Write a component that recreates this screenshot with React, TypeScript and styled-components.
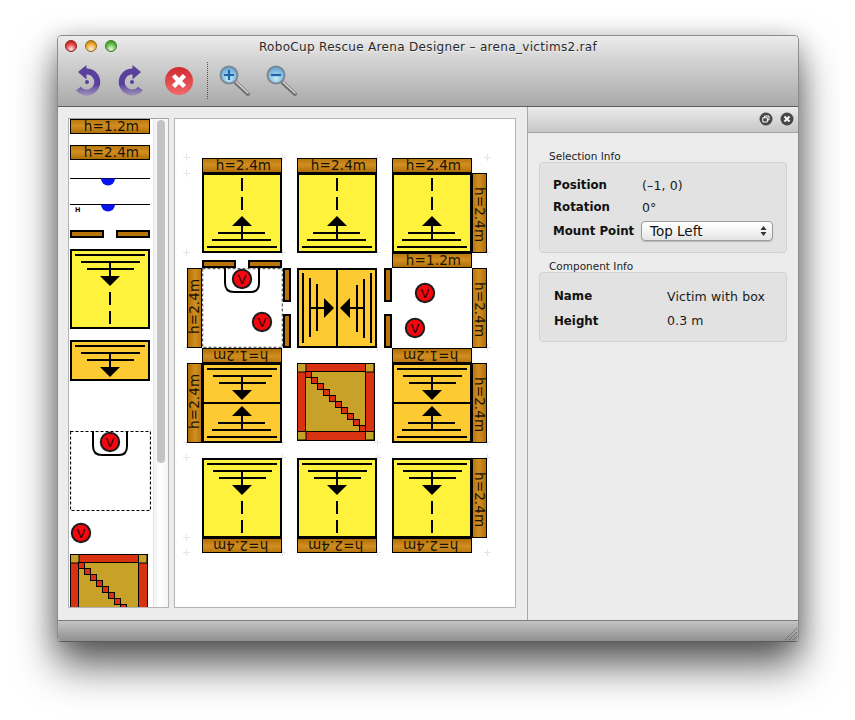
import React from 'react';
import styled, { createGlobalStyle } from 'styled-components';

const GlobalStyle = createGlobalStyle`
  html, body {
    margin: 0;
    padding: 0;
    background: #fff;
    font-family: 'DejaVu Sans', 'Liberation Sans', sans-serif;
  }
`;

const Page = styled.div`
  width: 855px;
  height: 720px;
  padding: 35px 0 0 57px;
  box-sizing: border-box;
  overflow: hidden;
`;

const Window = styled.div`
  width: 742px;
  height: 607px;
  box-sizing: border-box;
  display: flex;
  flex-direction: column;
  border: 1px solid #8c8c8c;
  border-bottom-color: #5c5c5c;
  border-radius: 5px 5px 4px 4px;
  background: #ececec;
  box-shadow: 0 24px 42px rgba(0, 0, 0, 0.62), 0 4px 24px rgba(0, 0, 0, 0.22);
`;

const Header = styled.div`
  height: 71px;
  flex: none;
  box-sizing: border-box;
  border-bottom: 1px solid #5e5e5e;
  border-radius: 4px 4px 0 0;
  background: linear-gradient(#ececec, #d6d6d6 30%, #a9a9a9);
  display: flex;
  flex-direction: column;
`;

const TitleBar = styled.div`
  height: 22px;
  position: relative;
  display: flex;
  align-items: center;
  justify-content: center;
`;

const Lights = styled.div`
  position: absolute;
  left: 7px;
  top: 4px;
  display: flex;
  gap: 8px;
`;

const Light = styled.span<{ $color: string; $dark: string }>`
  width: 12px;
  height: 12px;
  border-radius: 50%;
  border: 1px solid ${(p) => p.$dark};
  box-sizing: border-box;
  background: radial-gradient(circle at 50% 80%, #fff8 0, ${(p) => p.$color} 55%, ${(p) => p.$dark} 100%);
`;

const Title = styled.div`
  font-size: 12px;
  color: #2a2a2a;
  letter-spacing: 0.32px;
  text-shadow: 0 1px 0 #f2f2f2;
`;

const Toolbar = styled.div`
  flex: 1;
  display: flex;
  align-items: flex-start;
  padding: 5px 0 0 11px;
`;

const ToolIcon = styled.svg<{ $right?: number; $left?: number; $top?: number }>`
  flex: none;
  display: block;
  margin: ${(p) => p.$top ?? 0}px ${(p) => p.$right ?? 0}px 0 ${(p) => p.$left ?? 0}px;
`;

const ToolSep = styled.div`
  width: 0;
  height: 37px;
  margin: -1px 11px 0 13px;
  border-left: 1px dotted #555;
`;

const Body = styled.div`
  flex: 1;
  display: flex;
  min-height: 0;
`;

const Main = styled.div`
  width: 470px;
  flex: none;
  box-sizing: border-box;
  border-right: 1px solid #a8a8a8;
  padding: 11px 0 12px 10px;
  display: flex;
  gap: 5px;
`;

const Palette = styled.div`
  width: 101px;
  flex: none;
  box-sizing: border-box;
  border: 1px solid #b4b4b4;
  border-top-color: #a0a0a0;
  background: #fff;
  display: flex;
  overflow: hidden;
`;

const PaletteList = styled.div`
  width: 84px;
  flex: none;
  padding-left: 1px;
  box-sizing: border-box;
  display: flex;
  flex-direction: column;
`;

const PaletteItem = styled.div<{ $gap: number }>`
  flex: none;
  margin-top: ${(p) => p.$gap}px;
  line-height: 0;
`;

const ScrollTrack = styled.div`
  flex: 1;
  padding: 1px 3px 0 3px;
  background: linear-gradient(90deg, #f2f2f2, #fff 40%, #f4f4f4);
  border-left: 1px solid #e6e6e6;
`;

const ScrollThumb = styled.div`
  height: 343px;
  border-radius: 4px;
  background: #c3c3c3;
`;

const Canvas = styled.div`
  width: 342px;
  flex: none;
  box-sizing: border-box;
  border: 1px solid #b4b4b4;
  background: #fff;
  position: relative;
  overflow: hidden;
`;

const Label = styled.div<{ $side?: 'top' | 'bottom' | 'left' | 'right' }>`
  box-sizing: border-box;
  border: 1px solid #000;
  color: #1a1204;
  font-size: 13.5px;
  letter-spacing: 0.01em;
  line-height: 13px;
  display: flex;
  align-items: center;
  justify-content: center;
  padding-inline-start: 3px;
  overflow: hidden;
  white-space: nowrap;
  width: ${(p) => (p.$side === 'left' || p.$side === 'right' ? '15px' : '80px')};
  height: ${(p) => (p.$side === 'left' || p.$side === 'right' ? '80px' : '15px')};
  writing-mode: ${(p) => (p.$side === 'left' || p.$side === 'right' ? 'vertical-rl' : 'horizontal-tb')};
  transform: ${(p) => (p.$side === 'left' || p.$side === 'bottom' ? 'rotate(180deg)' : 'none')};
  background: linear-gradient(
    ${(p) => (p.$side === 'left' || p.$side === 'right' ? '90deg' : '180deg')},
    #b9780e,
    #d18f22 45%,
    #b06f06
  );
`;

const PlacedLabel = styled(Label)<{ $x: number; $y: number }>`
  position: absolute;
  left: ${(p) => p.$x}px;
  top: ${(p) => p.$y}px;
`;

const Drawing = styled.svg`
  display: block;
`;

const PlacedDrawing = styled.svg<{ $x: number; $y: number }>`
  display: block;
  position: absolute;
  left: ${(p) => p.$x}px;
  top: ${(p) => p.$y}px;
`;

const Cross = styled.span<{ $x: number; $y: number }>`
  position: absolute;
  left: ${(p) => p.$x - 3}px;
  top: ${(p) => p.$y - 3}px;
  width: 7px;
  height: 7px;
  background:
    linear-gradient(#e6e6e6, #e6e6e6) 3px 0 / 1px 7px no-repeat,
    linear-gradient(#e6e6e6, #e6e6e6) 0 3px / 7px 1px no-repeat;
`;

const Side = styled.div`
  flex: 1;
  display: flex;
  flex-direction: column;
`;

const SideHead = styled.div`
  height: 26px;
  flex: none;
  box-sizing: border-box;
  border-bottom: 1px solid #a4a4a4;
  background: linear-gradient(#ececec, #c6c6c6);
  display: flex;
  align-items: center;
  justify-content: flex-end;
  gap: 7px;
  padding: 0 4px 1px 0;
`;

const SideContent = styled.div`
  padding: 17px 11px 0 11px;
  display: flex;
  flex-direction: column;
`;

const GroupTitle = styled.div`
  font-size: 10.5px;
  line-height: 12px;
  color: #1c1c1c;
  padding-left: 10px;
`;

const Group = styled.div<{ $height: number; $pad: number }>`
  height: ${(p) => p.$height}px;
  box-sizing: border-box;
  margin: 0 0 7px 0;
  padding-top: ${(p) => p.$pad}px;
  border: 1px solid #d2d2d2;
  border-radius: 4px;
  background: #e2e2e2;
  display: flex;
  flex-direction: column;
`;

const InfoRow = styled.div<{ $height: number; $left: number; $labelWidth: number }>`
  height: ${(p) => p.$height}px;
  flex: none;
  display: grid;
  grid-template-columns: ${(p) => p.$labelWidth}px 1fr;
  align-items: center;
  padding-left: ${(p) => p.$left}px;
`;

const InfoLabel = styled.span`
  font-size: 11.8px;
  font-weight: bold;
  color: #111;
`;

const InfoValue = styled.span`
  font-size: 12.5px;
  letter-spacing: 0.01em;
  color: #1a1a1a;
`;

const Select = styled.div`
  width: 132px;
  height: 20px;
  margin-left: -1px;
  box-sizing: border-box;
  border: 1px solid #9a9a9a;
  border-radius: 4px;
  background: linear-gradient(#fff, #f4f4f4 50%, #e4e4e4);
  box-shadow: 0 1px 1px rgba(0, 0, 0, 0.18);
  display: flex;
  align-items: center;
  justify-content: space-between;
  padding: 0 5px 0 8px;
  font-size: 13.5px;
  color: #111;
`;

const StatusBar = styled.div`
  height: 21px;
  flex: none;
  box-sizing: border-box;
  border-top: 1px solid #7c7c7c;
  border-radius: 0 0 4px 4px;
  background: linear-gradient(#c4c4c4, #8f8f8f);
  display: flex;
  justify-content: flex-end;
  align-items: flex-end;
`;

// ---- drawings ----

const Ramp = ({ rotate = 0, dashes = false }: { rotate?: number; dashes?: boolean }) => (
  <g transform={`rotate(${rotate} 40 40)`} stroke="#000" strokeWidth={2} fill="none">
    <path d="M5 6H75M11 13H70M17 20H64M40 13V28" />
    <path d="M30 27H50L40 37Z" fill="#000" stroke="none" />
    {dashes && <path d="M40 43V56M40 62V75" />}
  </g>
);

const YellowTile = ({ rotate }: { rotate: number }) => (
  <>
    <rect x={1} y={1} width={78} height={78} fill="#fff23c" stroke="#000" strokeWidth={2} />
    <Ramp rotate={rotate} dashes />
  </>
);

const Victim = ({ cx, cy }: { cx: number; cy: number }) => (
  <g>
    <circle cx={cx} cy={cy} r={9.2} fill="#f4070f" stroke="#1c1c1c" strokeWidth={2} />
    <text x={cx} y={cy + 4.8} textAnchor="middle" fontSize={13} fontFamily="'DejaVu Sans', sans-serif" fill="#300">
      V
    </text>
  </g>
);

const VictimBox = ({ stroke, weight }: { stroke: string; weight: number }) => (
  <>
    <rect x={0.5} y={0.5} width={80} height={79} fill="#fff" stroke={stroke} strokeWidth={weight} strokeDasharray="3 2" />
    <path d="M23 0V15Q23 24 32 24H49Q57 24 57 15V0" fill="none" stroke="#000" strokeWidth={2} />
    <Victim cx={40} cy={11} />
  </>
);

const RedTile = () => {
  const steps = Array.from({ length: 10 }, (_, i) => i);
  return (
    <>
      <rect x={0.5} y={0.5} width={77} height={77} fill="#d83212" stroke="#000" />
      <rect x={8.5} y={8.5} width={60} height={60} fill="#c8a228" stroke="#000" />
      {[
        [0.5, 0.5],
        [68.5, 0.5],
        [0.5, 68.5],
        [68.5, 68.5],
      ].map(([x, y]) => (
        <rect key={`${x}-${y}`} x={x} y={y} width={8.5} height={8.5} fill="#c8a228" stroke="#000" />
      ))}
      {steps.map((i) => (
        <rect key={i} x={8.5 + i * 6} y={8.5 + i * 6} width={6} height={6} fill="#d83212" stroke="#000" />
      ))}
    </>
  );
};

const DoorH = () => (
  <>
    <rect x={1} y={1} width={32} height={6} fill="#b87408" stroke="#000" strokeWidth={2} />
    <rect x={47} y={1} width={32} height={6} fill="#b87408" stroke="#000" strokeWidth={2} />
  </>
);

const DoorV = () => (
  <>
    <rect x={1} y={1} width={6} height={32} fill="#b87408" stroke="#000" strokeWidth={2} />
    <rect x={1} y={47} width={6} height={32} fill="#b87408" stroke="#000" strokeWidth={2} />
  </>
);

const Wall = ({ mark }: { mark?: boolean }) => (
  <Drawing width={80} height={26} viewBox="0 0 80 26">
    <path d="M0 12.5H80" stroke="#000" strokeWidth={1} />
    <path d="M31 12.5H45A7 7 0 0 1 31 12.5Z" fill="#0a14f0" />
    {mark && (
      <text x={5} y={20} fontSize={6.5} fontWeight="bold" fontFamily="'DejaVu Sans', sans-serif">
        H
      </text>
    )}
  </Drawing>
);

const Undo = ({ flip }: { flip?: boolean }) => {
  const id = flip ? 'redoFade' : 'undoFade';
  return (
    <ToolIcon width={36} height={36} viewBox="0 0 36 36" $right={9}>
      <defs>
        <linearGradient id={id} gradientUnits="userSpaceOnUse" x1="0" y1="5" x2="0" y2="33">
          <stop offset="0.6" stopColor="#5a3f9c" />
          <stop offset="1" stopColor="#8a78b8" stopOpacity="0.55" />
        </linearGradient>
      </defs>
      <g transform={flip ? 'translate(36 0) scale(-1 1)' : undefined}>
        <path d="M17 8.5H18A10.5 10.5 0 1 1 9.5 25.5" fill="none" stroke={`url(#${id})`} strokeWidth={6} />
        <path d="M17.5 2V16.5L9 9Z" fill="#5a3f9c" />
        <circle cx={18} cy={19} r={2} fill="#5a3f9c" />
      </g>
    </ToolIcon>
  );
};

const Stop = () => (
  <ToolIcon width={30} height={30} viewBox="0 0 30 30" $left={5} $top={3}>
    <defs>
      <linearGradient id="stopFill" x1="0" y1="0" x2="0" y2="1">
        <stop offset="0" stopColor="#d22a30" />
        <stop offset="1" stopColor="#f06a6a" />
      </linearGradient>
    </defs>
    <circle cx={15} cy={15} r={14} fill="url(#stopFill)" />
    <path d="M9.5 9.5L20.5 20.5M20.5 9.5L9.5 20.5" stroke="#fff" strokeWidth={4.5} />
  </ToolIcon>
);

const Magnifier = ({ plus, id }: { plus?: boolean; id: string }) => (
  <ToolIcon width={34} height={36} viewBox="0 0 34 36" $right={13}>
    <defs>
      <radialGradient id={id} cx="0.5" cy="0.7" r="0.7">
        <stop offset="0" stopColor="#c4ecf6" />
        <stop offset="1" stopColor="#5aa0d0" />
      </radialGradient>
    </defs>
    <path d="M16 19L29 31" stroke="#6f6f6f" strokeWidth={4} strokeLinecap="round" />
    <path d="M17 19L29 30" stroke="#d6d6d6" strokeWidth={1.6} strokeLinecap="round" />
    <circle cx={10} cy={12} r={8.5} fill={`url(#${id})`} stroke="#7b8a96" strokeWidth={2} />
    <path d={plus ? 'M5 12H15M10 7V17' : 'M5 12H15'} stroke="#1f66a8" strokeWidth={2.2} />
  </ToolIcon>
);

const PanelButton = ({ kind }: { kind: 'float' | 'close' }) => (
  <Drawing width={14} height={14} viewBox="0 0 14 14">
    <circle cx={7} cy={7} r={6.5} fill="#484848" />
    {kind === 'close' ? (
      <path d="M4.5 4.5L9.5 9.5M9.5 4.5L4.5 9.5" stroke="#fff" strokeWidth={2} />
    ) : (
      <path d="M5.5 5.5V4H10V8H8.5M3.8 5.7H8.3V10H3.8Z" fill="none" stroke="#fff" strokeWidth={1} />
    )}
  </Drawing>
);

// ---- canvas contents (offsets inside the canvas) ----

const CANVAS_X = 175;
const CANVAS_Y = 119;

const labels: { text: string; side: 'top' | 'bottom' | 'left' | 'right'; x: number; y: number }[] = [
  { text: 'h=2.4m', side: 'top', x: 202, y: 158 },
  { text: 'h=2.4m', side: 'top', x: 297, y: 158 },
  { text: 'h=2.4m', side: 'top', x: 392, y: 158 },
  { text: 'h=2.4m', side: 'right', x: 472, y: 173 },
  { text: 'h=1.2m', side: 'top', x: 392, y: 253 },
  { text: 'h=2.4m', side: 'left', x: 187, y: 268 },
  { text: 'h=2.4m', side: 'right', x: 472, y: 268 },
  { text: 'h=1.2m', side: 'bottom', x: 202, y: 348 },
  { text: 'h=1.2m', side: 'bottom', x: 392, y: 348 },
  { text: 'h=2.4m', side: 'left', x: 187, y: 363 },
  { text: 'h=2.4m', side: 'right', x: 472, y: 363 },
  { text: 'h=2.4m', side: 'right', x: 472, y: 458 },
  { text: 'h=2.4m', side: 'bottom', x: 202, y: 538 },
  { text: 'h=2.4m', side: 'bottom', x: 297, y: 538 },
  { text: 'h=2.4m', side: 'bottom', x: 392, y: 538 },
];

const crosses = [
  [186, 157], [282, 157], [377, 157], [487, 157],
  [186, 173], [186, 252], [282, 252], [377, 252], [487, 252],
  [186, 347], [282, 347], [377, 347], [487, 347],
  [186, 442], [282, 442], [377, 442], [487, 442],
  [186, 457], [282, 457], [377, 457], [487, 457],
  [186, 537], [186, 552], [282, 552], [377, 552], [487, 552],
];

const PlacedTile = ({ x, y, children }: { x: number; y: number; children: React.ReactNode }) => (
  <PlacedDrawing $x={x - CANVAS_X} $y={y - CANVAS_Y} width={81} height={80} viewBox="0 0 81 80">
    {children}
  </PlacedDrawing>
);

const OrangeDouble = () => (
  <>
    <rect x={1} y={1} width={78} height={78} fill="#fdcb31" stroke="#000" strokeWidth={2} />
    <Ramp />
    <Ramp rotate={180} />
    <path d="M1 40H79" stroke="#000" strokeWidth={2} />
  </>
);

const App = (): JSX.Element => (
  <Page>
    <GlobalStyle />
    <Window>
      <Header>
        <TitleBar>
          <Lights>
            <Light $color="#ee3c3c" $dark="#8e1c1c" />
            <Light $color="#f4a92c" $dark="#96691a" />
            <Light $color="#5cbe3e" $dark="#3a7a28" />
          </Lights>
          <Title>RoboCup Rescue Arena Designer – arena_victims2.raf</Title>
        </TitleBar>
        <Toolbar>
          <Undo />
          <Undo flip />
          <Stop />
          <ToolSep />
          <Magnifier plus id="lensIn" />
          <Magnifier id="lensOut" />
        </Toolbar>
      </Header>
      <Body>
        <Main>
          <Palette>
            <PaletteList>
              <PaletteItem $gap={0}>
                <Label>h=1.2m</Label>
              </PaletteItem>
              <PaletteItem $gap={11}>
                <Label>h=2.4m</Label>
              </PaletteItem>
              <PaletteItem $gap={6}>
                <Wall />
              </PaletteItem>
              <PaletteItem $gap={0}>
                <Wall mark />
              </PaletteItem>
              <PaletteItem $gap={12}>
                <Drawing width={80} height={8} viewBox="0 0 80 8">
                  <DoorH />
                </Drawing>
              </PaletteItem>
              <PaletteItem $gap={11}>
                <Drawing width={80} height={80} viewBox="0 0 80 80">
                  <YellowTile rotate={0} />
                </Drawing>
              </PaletteItem>
              <PaletteItem $gap={11}>
                <Drawing width={80} height={41} viewBox="0 0 80 41">
                  <rect x={1} y={1} width={78} height={39} fill="#fdcb31" stroke="#000" strokeWidth={2} />
                  <Ramp />
                </Drawing>
              </PaletteItem>
              <PaletteItem $gap={50}>
                <Drawing width={81} height={80} viewBox="0 0 81 80">
                  <VictimBox stroke="#000" weight={1.2} />
                </Drawing>
              </PaletteItem>
              <PaletteItem $gap={11}>
                <Drawing width={22} height={22} viewBox="0 0 22 22">
                  <Victim cx={11} cy={11} />
                </Drawing>
              </PaletteItem>
              <PaletteItem $gap={10}>
                <Drawing width={78} height={78} viewBox="0 0 78 78">
                  <RedTile />
                </Drawing>
              </PaletteItem>
            </PaletteList>
            <ScrollTrack>
              <ScrollThumb />
            </ScrollTrack>
          </Palette>
          <Canvas>
            {crosses.map(([x, y]) => (
              <Cross key={`${x}-${y}`} $x={x - CANVAS_X} $y={y - CANVAS_Y} />
            ))}
            {labels.map((l) => (
              <PlacedLabel key={`${l.x}-${l.y}-${l.side}`} $side={l.side} $x={l.x - CANVAS_X} $y={l.y - CANVAS_Y}>
                {l.text}
              </PlacedLabel>
            ))}
            <PlacedTile x={202} y={173}><YellowTile rotate={180} /></PlacedTile>
            <PlacedTile x={297} y={173}><YellowTile rotate={180} /></PlacedTile>
            <PlacedTile x={392} y={173}><YellowTile rotate={180} /></PlacedTile>

            <PlacedDrawing $x={27} $y={141} width={80} height={8} viewBox="0 0 80 8"><DoorH /></PlacedDrawing>
            <PlacedTile x={202} y={268}>
              <VictimBox stroke="#666" weight={1.6} />
              <Victim cx={60} cy={54} />
            </PlacedTile>
            <PlacedDrawing $x={108} $y={149} width={8} height={80} viewBox="0 0 8 80"><DoorV /></PlacedDrawing>
            <PlacedTile x={297} y={268}>
              <rect x={1} y={1} width={78} height={78} fill="#fdcb31" stroke="#000" strokeWidth={2} />
              <Ramp rotate={-90} />
              <Ramp rotate={90} />
              <path d="M40 1V79" stroke="#000" strokeWidth={2} />
            </PlacedTile>
            <PlacedDrawing $x={209} $y={149} width={8} height={80} viewBox="0 0 8 80"><DoorV /></PlacedDrawing>
            <PlacedTile x={392} y={268}>
              <Victim cx={33} cy={25} />
              <Victim cx={23} cy={60} />
            </PlacedTile>

            <PlacedTile x={202} y={363}><OrangeDouble /></PlacedTile>
            <PlacedTile x={297} y={363}><RedTile /></PlacedTile>
            <PlacedTile x={392} y={363}><OrangeDouble /></PlacedTile>

            <PlacedTile x={202} y={458}><YellowTile rotate={0} /></PlacedTile>
            <PlacedTile x={297} y={458}><YellowTile rotate={0} /></PlacedTile>
            <PlacedTile x={392} y={458}><YellowTile rotate={0} /></PlacedTile>
          </Canvas>
        </Main>
        <Side>
          <SideHead>
            <PanelButton kind="float" />
            <PanelButton kind="close" />
          </SideHead>
          <SideContent>
            <GroupTitle>Selection Info</GroupTitle>
            <Group $height={91} $pad={11}>
              <InfoRow $height={22} $left={13} $labelWidth={89}>
                <InfoLabel>Position</InfoLabel>
                <InfoValue>(–1, 0)</InfoValue>
              </InfoRow>
              <InfoRow $height={22} $left={13} $labelWidth={89}>
                <InfoLabel>Rotation</InfoLabel>
                <InfoValue>0°</InfoValue>
              </InfoRow>
              <InfoRow $height={26} $left={13} $labelWidth={89}>
                <InfoLabel>Mount Point</InfoLabel>
                <Select>
                  Top Left
                  <Drawing width={7} height={12} viewBox="0 0 7 12">
                    <path d="M3.5 1L6.5 5H0.5ZM3.5 11L0.5 7H6.5Z" fill="#333" />
                  </Drawing>
                </Select>
              </InfoRow>
            </Group>
            <GroupTitle>Component Info</GroupTitle>
            <Group $height={70} $pad={11}>
              <InfoRow $height={24} $left={14} $labelWidth={113}>
                <InfoLabel>Name</InfoLabel>
                <InfoValue>Victim with box</InfoValue>
              </InfoRow>
              <InfoRow $height={25} $left={14} $labelWidth={113}>
                <InfoLabel>Height</InfoLabel>
                <InfoValue>0.3 m</InfoValue>
              </InfoRow>
            </Group>
          </SideContent>
        </Side>
      </Body>
      <StatusBar>
        <Drawing width={14} height={14} viewBox="0 0 14 14">
          <path d="M1 13L13 1M5 13L13 5M9 13L13 9" stroke="#666" strokeWidth={1} strokeDasharray="2 1" />
        </Drawing>
      </StatusBar>
    </Window>
  </Page>
);

export default App;
